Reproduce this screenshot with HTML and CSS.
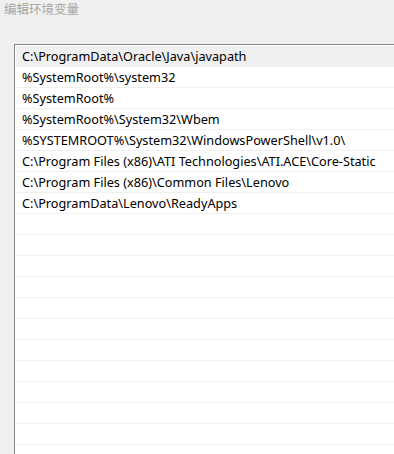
FILE: index.html
```html
<!DOCTYPE html>
<html lang="zh-CN">
<head>
<meta charset="utf-8">
<title>编辑环境变量</title>
<link rel="stylesheet" href="styles.css">
</head>
<body>
<div class="title">编辑环境变量</div>
<div class="list">
  <div class="row selected">C:\ProgramData\Oracle\Java\javapath</div>
  <div class="row">%SystemRoot%\system32</div>
  <div class="row">%SystemRoot%</div>
  <div class="row">%SystemRoot%\System32\Wbem</div>
  <div class="row">%SYSTEMROOT%\System32\WindowsPowerShell\v1.0\</div>
  <div class="row">C:\Program Files (x86)\ATI Technologies\ATI.ACE\Core-Static</div>
  <div class="row">C:\Program Files (x86)\Common Files\Lenovo</div>
  <div class="row">C:\ProgramData\Lenovo\ReadyApps</div>
  <div class="row"></div>
  <div class="row"></div>
  <div class="row"></div>
  <div class="row"></div>
  <div class="row"></div>
  <div class="row"></div>
  <div class="row"></div>
  <div class="row"></div>
  <div class="row"></div>
  <div class="row"></div>
  <div class="row"></div>
  <div class="row"></div>
</div>
</body>
</html>
```
FILE: styles.css
```css
html, body {
  margin: 0;
  padding: 0;
  background: #f0f0f0;
  overflow: hidden;
  width: 394px;
  height: 454px;
}
body {
  font-family: "Noto Sans", "Noto Sans CJK SC", sans-serif;
  font-size: 12.7px;
  color: #000;
}
.title {
  font-family: "Noto Sans CJK SC", sans-serif;
  font-size: 12.5px;
  color: #a6a6a6;
  padding: 1px 0 0 4px;
  height: 16px;
  line-height: 16px;
}
.list {
  margin-top: 27px;
  margin-left: 14px;
  width: 420px;
  border-top: 1px solid #828790;
  border-left: 1px solid #828790;
  background: #fff;
  padding: 1px 0 0 1px;
}
.row {
  height: 20px;
  line-height: 20px;
  border-bottom: 1px solid #f0f0f0;
  padding-left: 6px;
  white-space: nowrap;
}
.row.selected {
  background: #f0f0f0;
}
```
